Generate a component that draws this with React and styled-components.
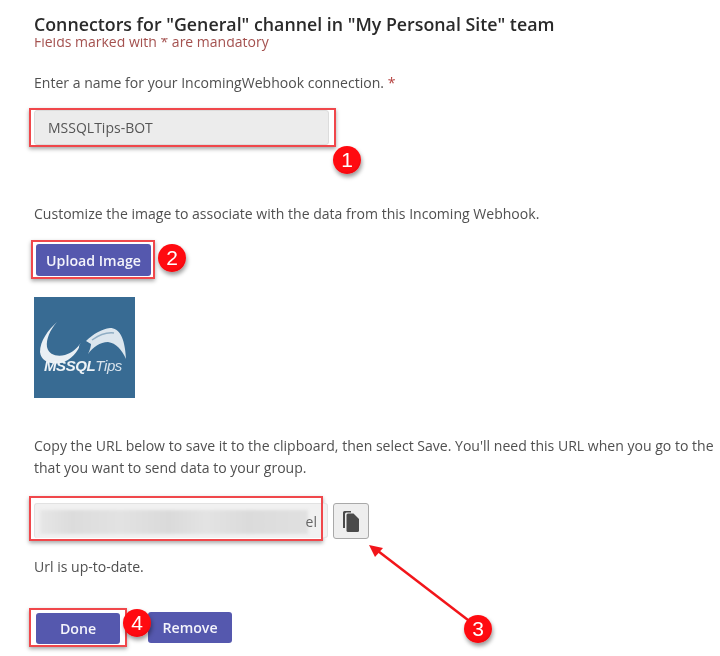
import React from 'react'
import styled, { createGlobalStyle } from 'styled-components'

const GlobalStyle = createGlobalStyle`
  html, body {
    margin: 0;
    background: #fff;
    overflow: hidden;
  }
  body {
    font-family: "Open Sans", "Noto Sans", sans-serif;
    color: #4c4c4c;
  }
`

const Page = styled.div`
  position: relative;
  width: 720px;
  height: 656px;
  overflow: hidden;
  background: #fff;
  filter: blur(0.35px);
`

const Header = styled.header`
  height: 38px;
  box-sizing: border-box;
  padding: 12px 0 0 34px;
  font-size: 17.8px;
  line-height: 24px;
  font-weight: 600;
  color: #2a2a2a;
  background: #fff;
  white-space: nowrap;
  position: relative;
  z-index: 1;
`

const Content = styled.main`
  padding-left: 34px;
  white-space: nowrap;
`

const Mandatory = styled.p`
  margin: -6px 0 0;
  font-size: 14px;
  line-height: 19px;
  color: #a4514f;
`

const Label = styled.p`
  margin: ${p => p.$top}px 0 0;
  font-size: 14.05px;
  line-height: 22px;
  color: #505050;
  span {
    color: #b5413f;
  }
`

const Row = styled.div`
  display: flex;
  align-items: center;
  gap: ${p => p.$gap || 0}px;
  margin-top: ${p => p.$top}px;
  margin-left: ${p => p.$left || 0}px;
`

const Marked = styled.div`
  display: flex;
  border: 2px solid #f0474b;
  box-shadow: 0 2px 4px rgba(0, 0, 0, 0.35);
  padding: ${p => p.$pad};
  flex: none;
`

const Field = styled.div`
  width: 295px;
  height: 35px;
  box-sizing: border-box;
  padding-left: 13px;
  font-size: 14px;
  line-height: 33px;
  color: #555;
  background: #ececec;
  border: 1px solid #dcdcdc;
  border-radius: 3px;
`

const Button = styled.button`
  width: ${p => p.$width}px;
  height: ${p => p.$height || 31}px;
  padding: 0 0 ${p => p.$lift || 0}px;
  border: 0;
  border-radius: 3px;
  font-family: inherit;
  font-size: 14.2px;
  font-weight: 600;
  color: #f4f4fb;
  background: #5558ae;
`

const Logo = styled.div`
  width: 101px;
  height: 101px;
  margin-top: 18px;
  background: #386b93;
  position: relative;
  overflow: hidden;
  svg {
    display: block;
  }
`

const LogoText = styled.span`
  position: absolute;
  left: 10px;
  top: 60px;
  font-family: "Liberation Sans", sans-serif;
  font-size: 15px;
  line-height: 18px;
  font-style: italic;
  color: #d8e3ec;
  letter-spacing: -0.4px;
  b {
    color: #eef3f7;
  }
`

const UrlShell = styled.div`
  display: flex;
  width: 290px;
  height: 41px;
  box-sizing: border-box;
  padding: 5px 0 1px 3px;
  overflow: hidden;
  background: #fff;
`

const UrlField = styled.div`
  position: relative;
  flex: 1;
  background: #f1f1f1;
  border-top: 1px solid #e2e2e2;
  border-left: 1px solid #e2e2e2;
  border-radius: 3px 0 0 3px;
`

const UrlBlur = styled.div`
  position: absolute;
  left: 5px;
  top: 6px;
  width: 268px;
  height: 24px;
  background: linear-gradient(
    90deg,
    #e6e6e6 0%,
    #dcdcdc 12%,
    #e2e2e2 30%,
    #dadada 48%,
    #e3e3e3 62%,
    #dbdbdb 78%,
    #e0e0e0 100%
  );
  filter: blur(1.5px);
`

const UrlTail = styled.span`
  position: absolute;
  right: 4px;
  top: 7px;
  font-size: 14px;
  line-height: 22px;
  color: #666;
  filter: blur(0.5px);
`

const UrlEdge = styled.div`
  width: 5px;
  height: 35px;
  margin-top: 4px;
  background: #f1f1f1;
  border-radius: 0 3px 3px 0;
  border: 1px solid #e4e4e4;
  border-left: 0;
  box-sizing: border-box;
  flex: none;
`

const CopyButton = styled.button`
  width: 36px;
  height: 36px;
  padding: 0;
  display: flex;
  align-items: center;
  justify-content: center;
  background: #eeeeee;
  border: 1px solid #a9a9a9;
  border-radius: 3px;
  margin: 5px 0 0 5px;
  flex: none;
`

const Badge = styled.div`
  position: absolute;
  left: ${p => p.$x - 14}px;
  top: ${p => p.$y - 14}px;
  width: 28px;
  height: 28px;
  border-radius: 50%;
  background: radial-gradient(circle at 45% 40%, #ff0a10 60%, #d30008 100%);
  box-shadow: 1px 3px 4px rgba(0, 0, 0, 0.4);
  color: #fff;
  font-family: "Liberation Sans", sans-serif;
  font-size: 21px;
  line-height: 28px;
  text-align: center;
`

const Arrow = styled.svg`
  position: absolute;
  left: 360px;
  top: 530px;
`

const App = () => (
  <Page>
    <GlobalStyle />
    <Header>Connectors for "General" channel in "My Personal Site" team</Header>
    <Content>
      <Mandatory>Fields marked with * are mandatory</Mandatory>
      <Label $top={21}>
        Enter a name for your IncomingWebhook connection. <span>*</span>
      </Label>
      <Row $top={14} $left={-5}>
        <Marked $pad="0 5px 0 3px">
          <Field>MSSQLTips-BOT</Field>
        </Marked>
      </Row>
      <Label $top={56}>Customize the image to associate with the data from this Incoming Webhook.</Label>
      <Row $top={15} $left={-3}>
        <Marked $pad="2px 2px 1px 3px">
          <Button $width={115} $height={32}>Upload Image</Button>
        </Marked>
      </Row>
      <Logo>
        <svg width="101" height="101" viewBox="0 0 101 101">
          <path
            d="M23 25 C16 33 12 42 13 50 C15 58 23 60 31 58 C38 56 43 51 47 46 C44 55 37 63 27 66 C16 68 7 64 6 55 C6 44 14 33 23 25 Z"
            fill="#e9eff4"
          />
          <path
            d="M52 44 C59 37 68 32 76 31 C85 31 91 40 92 62 C88 53 82 46 74 45 C66 45 59 50 54 57 C56 53 57 49 57 47 Z"
            fill="#dce6ee"
          />
          <path d="M58 43 C65 38 72 35 80 36" stroke="#8fadc4" strokeWidth="1.5" fill="none" />
          <circle cx="50" cy="50" r="5" fill="#386b93" />
        </svg>
        <LogoText>
          <b>MSSQL</b>Tips
        </LogoText>
      </Logo>
      <Label $top={37}>
        Copy the URL below to save it to the clipboard, then select Save. You'll need this URL when you go to the
        <br />
        that you want to send data to your group.
      </Label>
      <Row $top={17} $left={-5}>
        <Marked $pad="0">
          <UrlShell>
            <UrlField>
              <UrlBlur />
              <UrlTail>el</UrlTail>
            </UrlField>
          </UrlShell>
        </Marked>
        <UrlEdge />
        <CopyButton aria-label="Copy">
          <svg width="16" height="21" viewBox="0 0 16 21">
            <path d="M0 1.5 A1.5 1.5 0 0 1 1.5 0 H8 V1.5 H3.5 A1.5 1.5 0 0 0 2 3 V17 H0 Z" fill="#4a4a4a" />
            <path d="M3.5 4 A1.5 1.5 0 0 1 5 2.5 H10.5 L16 8 V19.5 A1.5 1.5 0 0 1 14.5 21 H5 A1.5 1.5 0 0 1 3.5 19.5 Z" fill="#4a4a4a" />
          </svg>
        </CopyButton>
      </Row>
      <Label $top={15}>Url is up-to-date.</Label>
      <Row $top={30} $left={-5} $gap={21}>
        <Marked $pad="3px 5px 1px 5px">
          <Button $width={84}>Done</Button>
        </Marked>
        <Button $width={84}>Remove</Button>
      </Row>
    </Content>
    <Arrow width="130" height="110" viewBox="0 0 130 110">
      <path d="M108 90 L18 21" stroke="#f2151a" strokeWidth="2.5" fill="none" />
      <path d="M9 15 L23 18 L15 27 Z" fill="#f2151a" />
    </Arrow>
    <Badge $x={347} $y={160}>1</Badge>
    <Badge $x={172} $y={258}>2</Badge>
    <Badge $x={478} $y={629}>3</Badge>
    <Badge $x={137} $y={623}>4</Badge>
  </Page>
)

export default App
